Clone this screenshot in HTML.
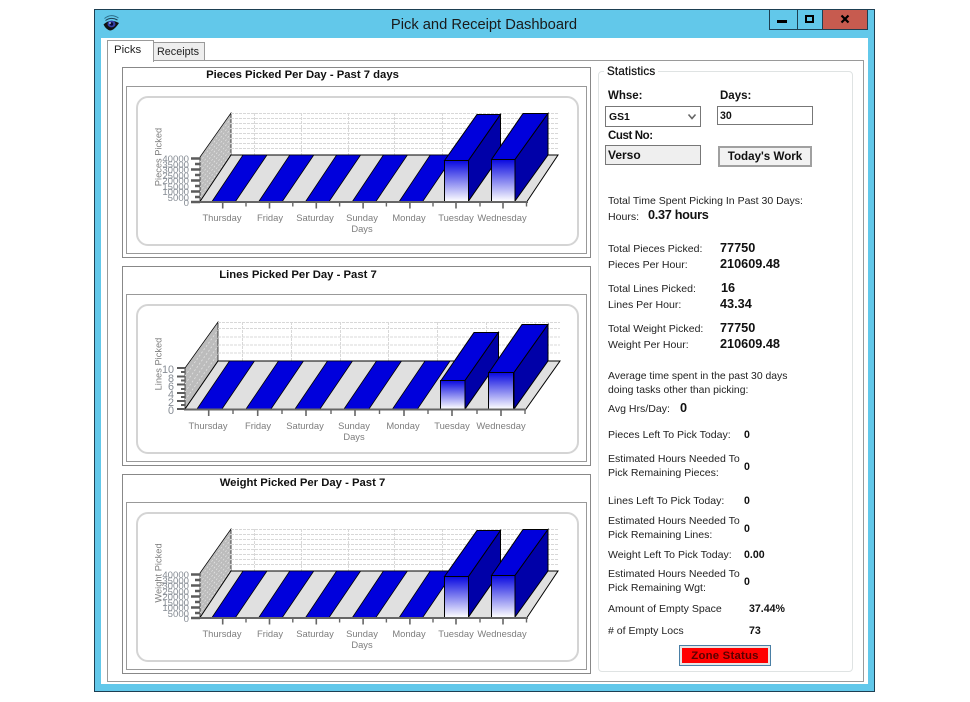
<!DOCTYPE html>
<html lang="en">
<head>
<meta charset="utf-8">
<title>Pick and Receipt Dashboard</title>
<style>
html,body{margin:0;padding:0;background:#fff;}
body{width:970px;height:702px;position:relative;overflow:hidden;font-family:"Liberation Sans",Arial,sans-serif;color:#1a1a1a;}
.a{position:absolute;box-sizing:border-box;}
.t{position:absolute;white-space:nowrap;font-size:10.55px;line-height:14px;color:#222;margin-top:3px;}
.b{position:absolute;white-space:nowrap;font-size:12.7px;line-height:14px;font-weight:bold;color:#111;}
.s{position:absolute;white-space:nowrap;font-size:10.6px;line-height:14px;font-weight:bold;color:#111;}
svg text{font-family:"Liberation Sans",Arial,sans-serif;}
.xl{font-size:9.4px;fill:#7d7d7d;text-anchor:middle;}
.yl{font-size:9.6px;fill:#868c94;text-anchor:end;}
.yt{font-size:9.3px;fill:#7d7d7d;text-anchor:middle;}
.ti{font-size:11.3px;font-weight:bold;fill:#111;text-anchor:middle;}
</style>
</head>
<body>
<!-- window -->
<div class="a" style="left:94px;top:9px;width:781px;height:683px;background:#62c8ea;border:1px solid #1d3f52;"></div>
<div class="a" style="left:101px;top:38px;width:767px;height:646px;background:#fff;"></div>
<div class="a" style="left:284px;top:15px;width:400px;text-align:center;font-size:14.7px;line-height:20px;color:#1a1a1a;white-space:nowrap;">Pick and Receipt Dashboard</div>

<!-- eye icon -->
<svg class="a" style="left:102px;top:13px;" width="20" height="20" viewBox="0 0 20 20">
<path d="M2.500 5.500 Q9 0 16.500 5" fill="none" stroke="#2d6e8a" stroke-width="1"/>
<path d="M3.500 7.500 Q9 3.500 15.500 7" fill="none" stroke="#1c3d55" stroke-width="1"/>
<path d="M1.500 11.500 Q8 5 17 10 Q12 17.500 8 17.500 Q4 16.500 1.500 11.500Z" fill="#111"/>
<ellipse cx="9.500" cy="11" rx="4" ry="3.400" fill="#3340a8"/>
<circle cx="9.500" cy="11" r="1.700" fill="#0a0a30"/>
<circle cx="8" cy="10" r="0.900" fill="#cfd4f0"/>
</svg>

<!-- window controls -->
<div class="a" style="left:769px;top:9px;width:29px;height:21px;border:1px solid #1d3f52;background:#62c8ea;"></div>
<div class="a" style="left:777px;top:20px;width:10px;height:3px;background:#000;"></div>
<div class="a" style="left:797px;top:9px;width:26px;height:21px;border:1px solid #1d3f52;background:#62c8ea;"></div>
<div class="a" style="left:805px;top:15px;width:9px;height:8px;border:2px solid #000;"></div>
<div class="a" style="left:822px;top:9px;width:46px;height:21px;border:1px solid #1d3f52;background:#c75b4f;"></div>
<svg class="a" style="left:840px;top:14px;" width="10" height="10" viewBox="0 0 10 10"><path d="M1.500 1.500L8.500 8.500M8.500 1.500L1.500 8.500" stroke="#000" stroke-width="2.200"/></svg>

<!-- tab page -->
<div class="a" style="left:107px;top:60px;width:757px;height:622px;border:1px solid #9a9a9a;background:#fff;"></div>
<div class="a" style="left:153px;top:42px;width:52px;height:19px;border:1px solid #9a9a9a;background:#eeeeee;"></div>
<div class="a" style="left:157px;top:45px;font-size:10.8px;line-height:14px;color:#222;white-space:nowrap;">Receipts</div>
<div class="a" style="left:107px;top:40px;width:47px;height:22px;border:1px solid #9a9a9a;border-bottom:0;background:#fff;"></div>
<div class="a" style="left:114px;top:43px;font-size:11.4px;line-height:14px;color:#222;white-space:nowrap;">Picks</div>

<!-- chart panels -->
<div class="a" style="left:122px;top:67px;width:469px;height:191px;border:1px solid #888;"></div>
<div class="a" style="left:126px;top:86px;width:461px;height:168px;border:1px solid #999;"></div>
<div class="a" style="left:136px;top:96px;width:443px;height:150px;border:2px solid #d4d4d4;border-radius:12px;"></div>

<div class="a" style="left:122px;top:266px;width:469px;height:200px;border:1px solid #888;"></div>
<div class="a" style="left:126px;top:294px;width:461px;height:168px;border:1px solid #999;"></div>
<div class="a" style="left:136px;top:304px;width:443px;height:150px;border:2px solid #d4d4d4;border-radius:12px;"></div>

<div class="a" style="left:122px;top:474px;width:469px;height:200px;border:1px solid #888;"></div>
<div class="a" style="left:126px;top:502px;width:461px;height:168px;border:1px solid #999;"></div>
<div class="a" style="left:136px;top:512px;width:443px;height:150px;border:2px solid #d4d4d4;border-radius:12px;"></div>

<svg class="a" style="left:0;top:0;" width="970" height="702" viewBox="0 0 970 702">
<defs>
<linearGradient id="g" x1="0" y1="0" x2="0" y2="1"><stop offset="0" stop-color="#0808e0"/><stop offset="1" stop-color="#ffffff"/></linearGradient>
<g id="c1">
<polygon points="200,157 231,113 231,155 200,202" fill="#bcbcbc" stroke="#000" stroke-width="0.7"/>
<path d="M200 162L231 118M200 167L231 123M200 172L231 128M200 177L231 133M200 182L231 138M200 187L231 143M200 192L231 148M200 197L231 153" stroke="#e4e4e4" stroke-width="0.7" stroke-dasharray="2 2"/>
<path d="M231 113.500H558M231 118.500H558M231 123.500H558M231 128.500H558M231 133.500H558M231 138.500H558M231 143.500H558M231 148.500H558M254.500 113V155M301.500 113V155M348.500 113V155M394.500 113V155M442.500 113V155M488.500 113V155M535.500 113V155" stroke="#d8d8d8" stroke-width="1" stroke-dasharray="3 1" fill="none"/>
<polygon points="200,201.500 231,155 558,155 527,201.500" fill="#e0e0e0" stroke="#000" stroke-width="1"/>
<g fill="#0000dc" stroke="#000" stroke-width="0.8">
<polygon points="212,201.500 243,155 267,155 235.500,201.500"/>
<polygon points="258.800,201.500 289.800,155 313.800,155 282.300,201.500"/>
<polygon points="305.600,201.500 336.600,155 360.600,155 329.100,201.500"/>
<polygon points="352.400,201.500 383.400,155 407.400,155 375.900,201.500"/>
<polygon points="399.200,201.500 430.200,155 454.200,155 422.700,201.500"/>
</g>
<polygon points="444.500,160.500 477,114.500 500.500,114.500 468.500,160.500" fill="#0000dc" stroke="#000"/>
<polygon points="468.500,160.500 500.500,114.500 500.500,155 468.500,201" fill="#0000a8" stroke="#000"/>
<rect x="444.500" y="160.500" width="24" height="41" fill="url(#g)" stroke="#000"/>
<polygon points="491.500,159.500 523,113.500 548,113.500 515,159.500" fill="#0000dc" stroke="#000"/>
<polygon points="515,159.500 548,113.500 548,155 515,201" fill="#0000a8" stroke="#000"/>
<rect x="491.500" y="159.500" width="23.500" height="42" fill="url(#g)" stroke="#000"/>
<path d="M199 202H528" stroke="#666" stroke-width="2"/>
<path d="M222.700 202V208.500M269.500 202V208.500M316.300 202V208.500M363.100 202V208.500M409.900 202V208.500M456 202V208.500M503 202V208.500" stroke="#666" stroke-width="1.600"/>
<path d="M246 202V206.500M292.800 202V206.500M339.600 202V206.500M386.400 202V206.500M433 202V206.500M480 202V206.500M526.500 202V206.500" stroke="#666" stroke-width="1.400"/>
<path d="M200 158.500H191M200 164H195M200 169.500H191M200 175H195M200 180.500H191M200 186H195M200 191.500H191M200 197H195M200 202H191" stroke="#5c5c5c" stroke-width="2.600"/>
</g>
</defs>

<use href="#c1"/>
<use href="#c1" y="416"/>

<!-- chart 1 text -->
<text class="ti" x="302.500" y="78">Pieces Picked Per Day - Past 7 days</text>
<text class="yt" transform="translate(161.500,157) rotate(-90)">Pieces Picked</text>
<text class="yl" x="189" y="206">0</text><text class="yl" x="189" y="201">5000</text><text class="yl" x="189" y="195">10000</text><text class="yl" x="189" y="190">15000</text><text class="yl" x="189" y="184">20000</text><text class="yl" x="189" y="179">25000</text><text class="yl" x="189" y="173">30000</text><text class="yl" x="189" y="168">35000</text><text class="yl" x="189" y="162">40000</text>
<text class="xl" x="222" y="221">Thursday</text><text class="xl" x="270" y="221">Friday</text><text class="xl" x="315" y="221">Saturday</text><text class="xl" x="362" y="221">Sunday</text><text class="xl" x="409" y="221">Monday</text><text class="xl" x="456" y="221">Tuesday</text><text class="xl" x="502" y="221">Wednesday</text><text class="xl" x="362" y="232">Days</text>

<!-- chart 2 -->
<polygon points="185,368 218,322 218,361 185,409" fill="#bcbcbc" stroke="#000" stroke-width="0.7"/>
<path d="M185 376L218 330M185 384L218 338M185 392L218 346M185 400L218 354" stroke="#e4e4e4" stroke-width="0.7" stroke-dasharray="2 2"/>
<path d="M218 322.500H560M218 328.500H560M218 337H560M218 345H560M218 353H560M242.500 322V361M291.500 322V361M340.500 322V361M388.500 322V361M437.500 322V361M486.500 322V361M535.500 322V361" stroke="#d8d8d8" stroke-width="1" stroke-dasharray="3 1" fill="none"/>
<polygon points="185,409 218,361 560,361 526,409" fill="#e0e0e0" stroke="#000" stroke-width="1"/>
<g fill="#0000dc" stroke="#000" stroke-width="0.8">
<polygon points="197,409 229.500,361 254.500,361 222,409"/>
<polygon points="246,409 278.500,361 303.500,361 271,409"/>
<polygon points="295,409 327.500,361 352.500,361 320,409"/>
<polygon points="344,409 376.500,361 401.500,361 369,409"/>
<polygon points="392.500,409 425,361 450,361 417.500,409"/>
</g>
<polygon points="441,380.500 474,332.500 498.500,332.500 465,380.500" fill="#0000dc" stroke="#000"/>
<polygon points="465,380.500 498.500,332.500 498.500,361 465,409" fill="#0000a8" stroke="#000"/>
<rect x="440.500" y="380.500" width="24.500" height="28.500" fill="url(#g)" stroke="#000"/>
<polygon points="489,372.500 522,324.500 548,324.500 514,372.500" fill="#0000dc" stroke="#000"/>
<polygon points="514,372.500 548,324.500 548,361 514,409" fill="#0000a8" stroke="#000"/>
<rect x="488.500" y="372.500" width="25" height="36.500" fill="url(#g)" stroke="#000"/>
<path d="M184 409.500H526" stroke="#666" stroke-width="2"/>
<path d="M208.700 409V416M257.700 409V416M306 409V416M355 409V416M404 409V416M452 409V416M501 409V416" stroke="#666" stroke-width="1.600"/>
<path d="M233 409V414M282 409V414M331 409V414M379.500 409V414M428 409V414M477 409V414M525 409V414" stroke="#666" stroke-width="1.400"/>
<path d="M185 368H177M185 372H181M185 376.500H177M185 380.500H181M185 384.500H177M185 389H181M185 393H177M185 397H181M185 401H177M185 405H181M185 409H177" stroke="#5c5c5c" stroke-width="2"/>
<text class="ti" x="298" y="278">Lines Picked Per Day - Past 7</text>
<text class="yt" transform="translate(161.500,364) rotate(-90)">Lines Picked</text>
<text class="yl" style="font-size:10.8px" x="174" y="414">0</text><text class="yl" style="font-size:10.8px" x="174" y="406">2</text><text class="yl" style="font-size:10.8px" x="174" y="398">4</text><text class="yl" style="font-size:10.8px" x="174" y="390">6</text><text class="yl" style="font-size:10.8px" x="174" y="382">8</text><text class="yl" style="font-size:10.8px" x="174" y="373">10</text>
<text class="xl" x="208" y="429">Thursday</text><text class="xl" x="258" y="429">Friday</text><text class="xl" x="305" y="429">Saturday</text><text class="xl" x="354" y="429">Sunday</text><text class="xl" x="403" y="429">Monday</text><text class="xl" x="452" y="429">Tuesday</text><text class="xl" x="501" y="429">Wednesday</text><text class="xl" x="354" y="440">Days</text>

<!-- chart 3 text -->
<text class="ti" x="302.500" y="486">Weight Picked Per Day - Past 7</text>
<text class="yt" transform="translate(161.500,573) rotate(-90)">Weight Picked</text>
<text class="yl" x="189" y="622">0</text><text class="yl" x="189" y="617">5000</text><text class="yl" x="189" y="611">10000</text><text class="yl" x="189" y="606">15000</text><text class="yl" x="189" y="600">20000</text><text class="yl" x="189" y="595">25000</text><text class="yl" x="189" y="589">30000</text><text class="yl" x="189" y="584">35000</text><text class="yl" x="189" y="578">40000</text>
<text class="xl" x="222" y="637">Thursday</text><text class="xl" x="270" y="637">Friday</text><text class="xl" x="315" y="637">Saturday</text><text class="xl" x="362" y="637">Sunday</text><text class="xl" x="409" y="637">Monday</text><text class="xl" x="456" y="637">Tuesday</text><text class="xl" x="502" y="637">Wednesday</text><text class="xl" x="362" y="648">Days</text>
</svg>

<!-- statistics group -->
<div class="a" style="left:598px;top:71px;width:255px;height:601px;border:1px solid #dfe3e3;border-radius:4px;"></div>
<div class="s" style="left:604px;top:65px;padding:0 3px;background:#fff;font-size:11.6px;font-weight:normal;letter-spacing:0.2px;-webkit-text-stroke:0.25px #111;">Statistics</div>
<div class="s" style="left:608px;top:89px;font-size:11.5px;">Whse:</div>
<div class="s" style="left:720px;top:89px;font-size:11.5px;">Days:</div>
<div class="a" style="left:605px;top:106px;width:96px;height:21px;border:1px solid #777;background:#fff;"></div>
<div class="s" style="left:609px;top:110px;margin-top:1px;font-size:10.4px;">GS1</div>
<svg class="a" style="left:687px;top:113px;" width="10" height="8" viewBox="0 0 10 8"><path d="M1.500 1.500L5 5.500L8.500 1.500" fill="none" stroke="#666" stroke-width="1.600"/></svg>
<div class="a" style="left:717px;top:106px;width:96px;height:19px;border:1px solid #777;background:#fff;"></div>
<div class="s" style="left:720px;top:109px;font-size:10.6px;">30</div>
<div class="s" style="left:608px;top:129px;font-size:11.5px;letter-spacing:-0.4px;">Cust No:</div>
<div class="a" style="left:605px;top:145px;width:96px;height:20px;border:1px solid #777;background:#efefef;"></div>
<div class="s" style="left:608px;top:148px;font-size:12px;">Verso</div>
<div class="a" style="left:718px;top:146px;width:94px;height:21px;border:2px solid #a0a0a0;background:#f2f2f2;"></div>
<div class="s" style="left:718px;top:150px;width:94px;text-align:center;font-size:11.6px;">Today's Work</div>

<div class="t" style="left:608px;top:191px;font-size:10.5px;">Total Time Spent Picking In Past 30 Days:</div>
<div class="t" style="left:608px;top:207px;">Hours:</div>
<div class="b" style="left:648px;top:208px;letter-spacing:-0.3px;">0.37 hours</div>

<div class="t" style="left:608px;top:239px;">Total Pieces Picked:</div>
<div class="b" style="left:720px;top:241px;">77750</div>
<div class="t" style="left:608px;top:255px;">Pieces Per Hour:</div>
<div class="b" style="left:720px;top:257px;">210609.48</div>

<div class="t" style="left:608px;top:279px;">Total Lines Picked:</div>
<div class="b" style="left:721px;top:281px;">16</div>
<div class="t" style="left:608px;top:295px;">Lines Per Hour:</div>
<div class="b" style="left:720px;top:297px;">43.34</div>

<div class="t" style="left:608px;top:319px;">Total Weight Picked:</div>
<div class="b" style="left:720px;top:321px;">77750</div>
<div class="t" style="left:608px;top:335px;">Weight Per Hour:</div>
<div class="b" style="left:720px;top:337px;">210609.48</div>

<div class="t" style="left:608px;top:367px;font-size:10.4px;">Average time spent in the past 30 days</div>
<div class="t" style="left:608px;top:381px;font-size:10.4px;">doing tasks other than picking:</div>
<div class="t" style="left:608px;top:399px;">Avg Hrs/Day:</div>
<div class="b" style="left:680px;top:401px;">0</div>

<div class="t" style="left:608px;top:425px;">Pieces Left To Pick Today:</div>
<div class="s" style="left:744px;top:428px;">0</div>
<div class="t" style="left:608px;top:449px;">Estimated Hours Needed To</div>
<div class="t" style="left:608px;top:463px;">Pick Remaining Pieces:</div>
<div class="s" style="left:744px;top:460px;">0</div>

<div class="t" style="left:608px;top:491px;">Lines Left To Pick Today:</div>
<div class="s" style="left:744px;top:494px;">0</div>
<div class="t" style="left:608px;top:511px;">Estimated Hours Needed To</div>
<div class="t" style="left:608px;top:525px;">Pick Remaining Lines:</div>
<div class="s" style="left:744px;top:522px;">0</div>

<div class="t" style="left:608px;top:545px;">Weight Left To Pick Today:</div>
<div class="s" style="left:744px;top:548px;">0.00</div>
<div class="t" style="left:608px;top:564px;">Estimated Hours Needed To</div>
<div class="t" style="left:608px;top:578px;">Pick Remaining Wgt:</div>
<div class="s" style="left:744px;top:575px;">0</div>

<div class="t" style="left:608px;top:599px;">Amount of Empty Space</div>
<div class="s" style="left:749px;top:602px;">37.44%</div>
<div class="t" style="left:608px;top:621px;"># of Empty Locs</div>
<div class="s" style="left:749px;top:624px;">73</div>

<div class="a" style="left:679px;top:645px;width:92px;height:21px;border:1px solid #4a7fa5;background:#e6e6e6;padding:2px;"><div style="width:100%;height:100%;background:#ff0000;"></div></div>
<div class="s" style="left:679px;top:649px;width:92px;text-align:center;font-size:11.4px;color:#5a0000;letter-spacing:0.2px;">Zone Status</div>
</body>
</html>
